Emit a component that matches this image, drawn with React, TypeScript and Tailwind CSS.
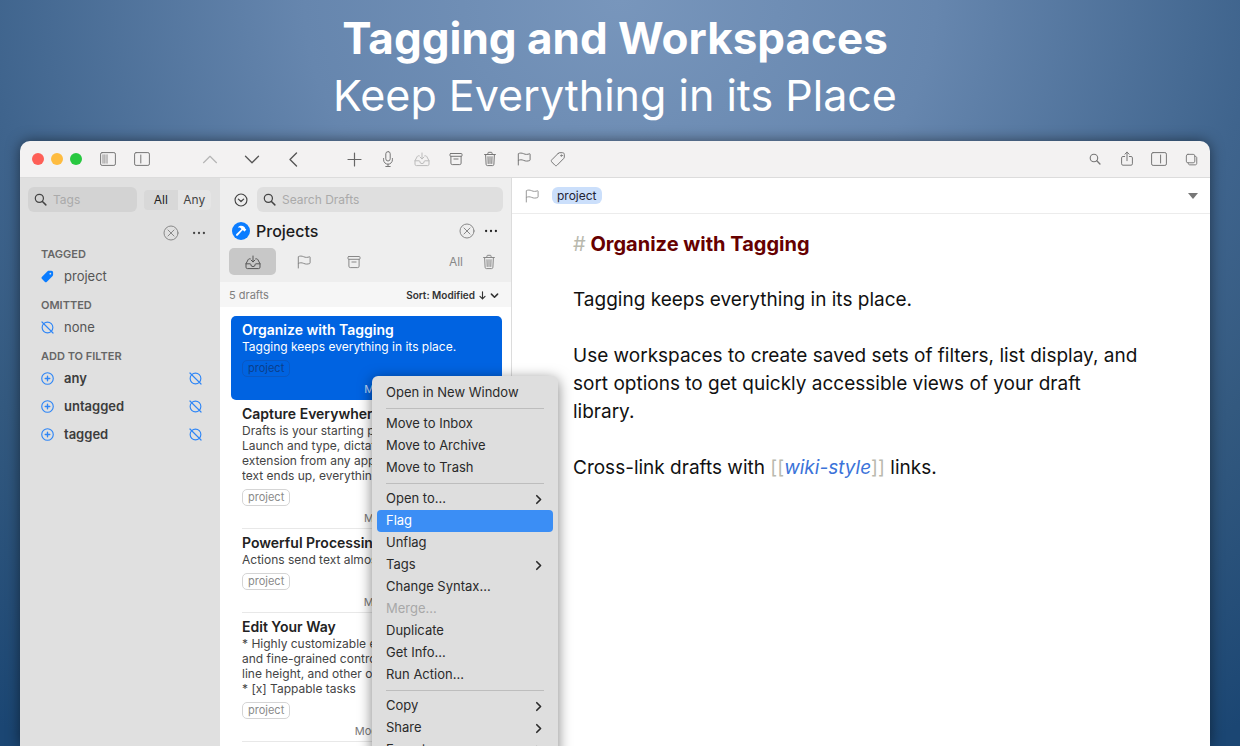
import React from 'react';

type IconProps = { className?: string; size?: number; children: React.ReactNode };

const Icon = ({ className = '', size = 16, children }: IconProps) => (
  <svg
    width={size}
    height={size}
    viewBox="0 0 16 16"
    fill="none"
    stroke="currentColor"
    strokeWidth="1"
    strokeLinecap="round"
    strokeLinejoin="round"
    className={`shrink-0 ${className}`}
    aria-hidden="true"
  >
    {children}
  </svg>
);

type GlyphProps = { className?: string; size?: number };

const PanelList = (p: GlyphProps) => (
  <Icon {...p}>
    <rect x="0.6" y="1.6" width="14.8" height="12.8" rx="1.5" />
    <path d="M3 3.8v8.4M4.9 3.8v8.4M7 3.8v8.4" strokeWidth="0.8" />
  </Icon>
);
const PanelLeft = (p: GlyphProps) => (
  <Icon {...p}>
    <rect x="0.6" y="1.6" width="14.8" height="12.8" rx="1.5" />
    <path d="M6.8 4v8" />
  </Icon>
);
const PanelRight = (p: GlyphProps) => (
  <Icon {...p}>
    <rect x="0.6" y="1.6" width="14.8" height="12.8" rx="1.5" />
    <path d="M9.6 4v8" />
  </Icon>
);
const ChevronUp = (p: GlyphProps) => (
  <Icon {...p}>
    <path d="M1.5 11.7 8 5.3l6.5 6.4" strokeWidth="1.2" />
  </Icon>
);
const ChevronDown = (p: GlyphProps) => (
  <Icon {...p}>
    <path d="M1.5 5.3 8 11.7l6.5-6.4" strokeWidth="1.3" />
  </Icon>
);
const ChevronLeft = (p: GlyphProps) => (
  <Icon {...p}>
    <path d="M10.5 2 4 8.5l6.5 6.5" strokeWidth="1.4" />
  </Icon>
);
const ChevronRight = (p: GlyphProps) => (
  <Icon {...p}>
    <path d="m5.5 2.5 5.5 5.5-5.5 5.5" strokeWidth="2.4" />
  </Icon>
);
const Plus = (p: GlyphProps) => (
  <Icon {...p}>
    <path d="M8.5 2v13M2 8.5h13" strokeWidth="1.2" />
  </Icon>
);
const Mic = (p: GlyphProps) => (
  <Icon {...p}>
    <rect x="5.8" y="0.6" width="4.4" height="9.4" rx="2.2" />
    <path d="M3.6 7.5v1.3a4.4 4.4 0 0 0 8.8 0V7.5M8 13.2v2.2M5.8 15.5h4.4" />
  </Icon>
);
const InboxDown = (p: GlyphProps) => (
  <Icon {...p}>
    <path d="M5.2 4.8h-.7c-.6 0-1 .2-1.3.8L1 9.7v3.5c0 .9.5 1.4 1.4 1.4h11.2c.9 0 1.4-.5 1.4-1.4V9.7l-2.2-4.1c-.3-.6-.7-.8-1.3-.8h-.7" />
    <path d="M1 9.8h4.2c.4 0 .6.3.6.6a2.2 2.2 0 0 0 4.4 0c0-.3.2-.6.6-.6H15M8 2v5.8M6.1 6.1 8 8l1.9-1.9" />
  </Icon>
);
const Archive = (p: GlyphProps) => (
  <Icon {...p}>
    <rect x="2" y="2.5" width="12" height="2.8" rx="0.7" />
    <path d="M2.9 5.3v6.9c0 .9.5 1.4 1.4 1.4h7.4c.9 0 1.4-.5 1.4-1.4V5.3M5.9 8h4.2" />
  </Icon>
);
const Trash = (p: GlyphProps) => (
  <Icon {...p}>
    <path d="M2.6 3.5h10.8M5.9 3.4V2.2c0-.6.3-.9.9-.9h2.4c.6 0 .9.3.9.9v1.2M3.6 3.6l.5 9.7c0 .8.5 1.3 1.3 1.3h5.2c.8 0 1.3-.5 1.3-1.3l.5-9.7M6 5.7l.2 6.8M8 5.7v6.8M10 5.7l-.2 6.8" />
  </Icon>
);
const Flag = (p: GlyphProps) => (
  <Icon {...p}>
    <path d="M2.3 14V2.7c1.7-.9 3.4-.8 5.3 0 2 .9 3.8.9 5.9.1.4-.1.6 0 .6.4v5.7c0 .3-.1.5-.4.6-2.1.8-4 .8-6-.1-1.9-.8-3.7-.9-5.4 0" />
  </Icon>
);
const Tag = (p: GlyphProps) => (
  <Icon {...p}>
    <path d="M8.3 2.3 1.8 8.8c-.7.7-.7 1.4 0 2.2l3.1 3.2c.7.7 1.5.7 2.2 0l6.5-6.6c.5-.5.7-.9.7-1.6V3.5c0-1.1-.7-1.8-1.8-1.8H9.9c-.7 0-1.1.1-1.6.6Z" />
    <circle cx="11.4" cy="4.6" r="0.7" />
  </Icon>
);
const TagFilled = (p: GlyphProps) => (
  <Icon {...p}>
    <path
      d="M8 1.6 1.3 8.3c-.9.9-.9 1.8 0 2.7l3.3 3.4c.9.9 1.8.9 2.7 0L14 7.7c.6-.6.9-1.2.9-2V3.2c0-1.3-.9-2.2-2.2-2.2H10c-.8 0-1.4.1-2 .6Zm3.5 1.8a1.100 1.100 0 1 1 0 2.200 1.100 1.100 0 0 1 0-2.200Z"
      fill="currentColor"
      fillRule="evenodd"
      stroke="none"
    />
  </Icon>
);
const Search = (p: GlyphProps) => (
  <Icon {...p}>
    <circle cx="6.6" cy="6.6" r="5" strokeWidth="1.5" />
    <path d="m10.4 10.4 4.2 4.2" strokeWidth="1.8" />
  </Icon>
);
const Share = (p: GlyphProps) => (
  <Icon {...p}>
    <path d="M5.7 5.5H3.9c-.8 0-1.3.5-1.3 1.3v6c0 .9.5 1.4 1.3 1.4h8.2c.8 0 1.3-.5 1.3-1.4v-6c0-.8-.5-1.3-1.3-1.3h-1.8M8 9.7V1.2M5.9 3.2 8 1.1l2.1 2.1" />
  </Icon>
);
const Copy = (p: GlyphProps) => (
  <Icon {...p}>
    <rect x="2.5" y="2.5" width="9" height="9" rx="1.7" />
    <path d="M11.7 4.7h.3c1 0 1.6.6 1.6 1.6v5.8c0 1-.6 1.6-1.6 1.6H6.2c-1 0-1.6-.6-1.6-1.6v-.4" />
  </Icon>
);
const CircleX = (p: GlyphProps) => (
  <Icon {...p}>
    <circle cx="8" cy="8" r="7" />
    <path d="m5 5 6 6M11 5l-6 6" />
  </Icon>
);
const CircleDown = (p: GlyphProps) => (
  <Icon {...p}>
    <circle cx="8" cy="8" r="6.8" strokeWidth="1.3" />
    <path d="M5 7l3 2.8L11 7" strokeWidth="1.5" />
  </Icon>
);
const CirclePlus = (p: GlyphProps) => (
  <Icon {...p}>
    <circle cx="8" cy="8" r="7.1" strokeWidth="1.4" />
    <path d="M8 5.2v5.6M5.2 8h5.6" strokeWidth="1.7" />
  </Icon>
);
const CircleSlash = (p: GlyphProps) => (
  <Icon {...p}>
    <circle cx="8" cy="8" r="6.6" strokeWidth="1.4" />
    <path d="m1.2 1.2 13.6 13.6" strokeWidth="1.4" />
  </Icon>
);
const Dots = (p: GlyphProps) => (
  <Icon {...p}>
    <g fill="currentColor" stroke="none">
      <circle cx="2.4" cy="8" r="1.3" />
      <circle cx="8" cy="8" r="1.3" />
      <circle cx="13.6" cy="8" r="1.3" />
    </g>
  </Icon>
);
const Hammer = () => (
  <svg width="18" height="18" viewBox="0 0 18 18" className="shrink-0" aria-hidden="true">
    <circle cx="9" cy="9" r="9" fill="#0a7cff" />
    <path d="M6 5.2c1.7-1.6 4.3-1.9 6.1-.4l.9.9c.3.3.2.6.2 1l.8.6c.3.2.3.4 0 .7l-1.2 1.2c-.3.3-.5.2-.7 0l-.7-.8-.9-.1-4.7 5.2c-.5.5-1.1.5-1.5.1-.5-.5-.4-1.1.1-1.6l5-4.8c-.5-1.2-1.5-1.8-3.1-1.6-.4 0-.5-.2-.3-.4Z" fill="#fff" />
  </svg>
);

const navActions = [
  { label: 'Previous draft', icon: ChevronUp, tone: 'text-[#b5b5b5]' },
  { label: 'Next draft', icon: ChevronDown, tone: 'text-[#555]' },
  { label: 'Back', icon: ChevronLeft, tone: 'text-[#555]' },
];

const draftActions = [
  { label: 'New draft', icon: Plus, tone: 'text-[#666]' },
  { label: 'Dictate', icon: Mic, tone: 'text-[#777]' },
  { label: 'Move to inbox', icon: InboxDown, tone: 'text-[#bbb]' },
  { label: 'Archive', icon: Archive, tone: 'text-[#777]' },
  { label: 'Trash', icon: Trash, tone: 'text-[#777]' },
  { label: 'Flag', icon: Flag, tone: 'text-[#777]' },
  { label: 'Tags', icon: Tag, tone: 'text-[#777]' },
];

const windowActions = [
  { label: 'Find', icon: Search, size: 12 },
  { label: 'Share', icon: Share, size: 16 },
  { label: 'Action list', icon: PanelRight, size: 16 },
  { label: 'Windows', icon: Copy, size: 15 },
];

const filters = ['any', 'untagged', 'tagged'];

const drafts = [
  {
    title: 'Organize with Tagging',
    lines: ['Tagging keeps everything in its place.'],
    modified: 'Modified 12 minutes ago',
    selected: true,
  },
  {
    title: 'Capture Everywhere',
    lines: [
      'Drafts is your starting point for text.',
      'Launch and type, dictate, or use the',
      'extension from any app. Wherever',
      'text ends up, everything starts here.',
    ],
    modified: 'Modified 13 minutes ago',
  },
  {
    title: 'Powerful Processing',
    lines: ['Actions send text almost anywhere.'],
    modified: 'Modified 14 minutes ago',
  },
  {
    title: 'Edit Your Way',
    lines: [
      '* Highly customizable editor, themes',
      'and fine-grained control of font size,',
      'line height, and other options.',
      '* [x] Tappable tasks',
    ],
    modified: 'Modified 200 minutes ago',
  },
];

type MenuItem = { label: string; sub?: boolean; active?: boolean; disabled?: boolean };

const menuGroups: MenuItem[][] = [
  [{ label: 'Open in New Window' }],
  [{ label: 'Move to Inbox' }, { label: 'Move to Archive' }, { label: 'Move to Trash' }],
  [
    { label: 'Open to...', sub: true },
    { label: 'Flag', active: true },
    { label: 'Unflag' },
    { label: 'Tags', sub: true },
    { label: 'Change Syntax...' },
    { label: 'Merge...', disabled: true },
    { label: 'Duplicate' },
    { label: 'Get Info...' },
    { label: 'Run Action...' },
  ],
  [
    { label: 'Copy', sub: true },
    { label: 'Share', sub: true },
    { label: 'Export', sub: true },
  ],
];

function Toolbar() {
  return (
    <header className="flex h-[37px] shrink-0 items-center rounded-t-[10px] border-b border-[#dcdcdc] bg-[#f3f2f2] pr-[3px] pl-3">
      <div className="flex gap-[7px]">
        <button aria-label="Close" className="size-3 rounded-full bg-[#fe5f57]" />
        <button aria-label="Minimize" className="size-3 rounded-full bg-[#febc40]" />
        <button aria-label="Zoom" className="size-3 rounded-full bg-[#28c840]" />
      </div>
      <div className="ml-[9px] flex text-[#777]">
        <button aria-label="Tag list" className="flex w-[34px] justify-center"><PanelList /></button>
        <button aria-label="Draft list" className="flex w-[34px] justify-center"><PanelLeft /></button>
      </div>
      <div className="ml-[30px] flex">
        {navActions.map((a) => (
          <button key={a.label} aria-label={a.label} className={`flex w-[42px] justify-center ${a.tone}`}>
            <a.icon />
          </button>
        ))}
      </div>
      <div className="ml-[22px] flex">
        {draftActions.map((a) => (
          <button key={a.label} aria-label={a.label} className={`flex w-[34px] justify-center ${a.tone}`}>
            <a.icon />
          </button>
        ))}
      </div>
      <div className="ml-auto flex items-center text-[#777]">
        {windowActions.map((a) => (
          <button key={a.label} aria-label={a.label} className="flex w-8 justify-center">
            <a.icon size={a.size} />
          </button>
        ))}
      </div>
    </header>
  );
}

function SearchField({ label, className }: { label: string; className: string }) {
  return (
    <label className={`flex h-[25px] items-center gap-1.5 rounded-md px-1.5 text-[#444] ${className}`}>
      <Search size={13} />
      <input
        type="search"
        aria-label={label}
        placeholder={label}
        className="w-full min-w-0 bg-transparent text-[12px] outline-none placeholder:text-[#aaa]"
      />
    </label>
  );
}

function TagSidebar() {
  return (
    <aside className="w-[200px] shrink-0 bg-[#e0e0e0] text-[13px] leading-[18px]">
      <div className="flex items-center gap-[7px] px-2 pt-[9px]">
        <SearchField label="Tags" className="w-[109px] bg-[#d3d3d3]" />
        <div className="flex h-5 w-[67px] rounded bg-[#d8d8d8] text-[12px] text-[#444]">
          <button className="flex-1 text-[#222]">All</button>
          <button className="flex-1 rounded-r bg-[#e5e5e5]">Any</button>
        </div>
      </div>
      <div className="mt-[13px] flex items-center justify-end gap-[13px] pr-[14px]">
        <button aria-label="Clear tag filter" className="text-[#888]"><CircleX /></button>
        <button aria-label="Tag options" className="text-[#444]"><Dots size={14} /></button>
      </div>
      <div className="pr-[18px] pl-[21px] text-[#555]">
        <h2 className="mt-1 text-[11px] font-semibold text-[#666]">TAGGED</h2>
        <div className="mt-1 flex items-center gap-[10px]">
          <TagFilled size={13} className="text-[#0a7cff]" />
          project
        </div>
        <h2 className="mt-[11px] text-[11px] font-semibold text-[#666]">OMITTED</h2>
        <div className="mt-1 flex items-center gap-[10px]">
          <CircleSlash size={13} className="text-[#2f86f6]" />
          none
        </div>
        <h2 className="mt-[11px] text-[11px] font-semibold text-[#666]">ADD TO FILTER</h2>
        <ul className="mt-1 flex flex-col gap-[10px]">
          {filters.map((name) => (
            <li key={name} className="flex items-center gap-[10px] font-semibold text-[#3c3c3c]">
              <button aria-label={`Include ${name}`} className="text-[#2f86f6]"><CirclePlus size={13} /></button>
              {name}
              <button aria-label={`Omit ${name}`} className="ml-auto text-[#2f86f6]"><CircleSlash size={13} /></button>
            </li>
          ))}
        </ul>
      </div>
    </aside>
  );
}

function DraftRow({ draft }: { draft: (typeof drafts)[number] }) {
  const on = draft.selected;
  return (
    <li className={`pl-[11px] whitespace-nowrap ${on ? 'rounded-[5px] bg-[#0063e1] text-white' : 'text-[#222]'}`}>
      <div className={`overflow-hidden border-b pt-[5px] pr-[11px] pb-[2px] ${on ? 'border-transparent' : 'border-[#e8e8e8]'}`}>
        <h3 className="text-[14px] leading-[17px] font-semibold">{draft.title}</h3>
        <p className={`mt-px text-[12px] leading-[15px] ${on ? '' : 'text-[#444]'}`}>
          {draft.lines.map((line) => (
            <span key={line} className="block">{line}</span>
          ))}
        </p>
        <div className="mt-1.5 flex">
          <span
            className={`h-[17px] rounded-[5px] border px-[5px] text-[11px] leading-[15px] ${
              on ? 'border-[#0a58c2] text-[#0b3f8c]' : 'border-[#d5d5d5] text-[#8a8a8a]'
            }`}
          >
            project
          </span>
        </div>
        <p className={`mt-[5px] text-right text-[11px] leading-[15px] ${on ? 'text-[#bcd5f8]' : 'text-[#777]'}`}>
          {draft.modified}
        </p>
      </div>
    </li>
  );
}

function DraftList() {
  return (
    <section className="flex w-[292px] shrink-0 flex-col overflow-hidden border-r border-[#dcdcdc] bg-white">
      <div className="bg-[#eeeeee] pb-[7px]">
        <div className="flex items-center gap-[9px] pt-[9px] pr-2 pl-[14px]">
          <button aria-label="Workspaces" className="text-[#444]"><CircleDown size={14} /></button>
          <SearchField label="Search Drafts" className="flex-1 bg-[#dfdfdf]" />
        </div>
        <div className="mt-[7px] flex h-6 items-center pr-[13px] pl-3">
          <Hammer />
          <h2 className="ml-1.5 text-[16px] font-medium text-[#1c1c1c]">Projects</h2>
          <button aria-label="Close workspace" className="ml-auto text-[#888]"><CircleX /></button>
          <button aria-label="Workspace options" className="ml-[9px] text-[#222]"><Dots size={14} /></button>
        </div>
        <div className="mt-[5px] flex h-[27px] items-center pr-[6px] pl-[9px] text-[#888]">
          <button aria-label="Inbox" className="flex h-[27px] w-[47px] items-center justify-center rounded-[5px] bg-[#c8c8c8] text-[#555]">
            <InboxDown />
          </button>
          <button aria-label="Flagged" className="ml-1 flex w-[47px] justify-center"><Flag /></button>
          <button aria-label="Archived" className="ml-[3px] flex w-[47px] justify-center"><Archive /></button>
          <button className="ml-auto text-[12px]">All</button>
          <button aria-label="Trashed" className="ml-[10px] flex w-8 justify-center"><Trash /></button>
        </div>
      </div>
      <div className="flex h-[25px] shrink-0 items-center justify-between bg-[#f6f6f6] pt-0.5 pr-3 pl-[9px] text-[11px]">
        <span className="text-[#808080]">5 drafts</span>
        <button className="flex items-center gap-[3px] text-[10px] font-semibold text-[#333]">
          Sort: Modified
          <Icon size={9}>
            <path d="M8 1.5v12.5M3.5 9.5 8 14l4.5-4.5" strokeWidth="2" />
          </Icon>
          <Icon size={9}>
            <path d="m2.5 5.5 5.5 5.5 5.5-5.5" strokeWidth="2.8" />
          </Icon>
        </button>
      </div>
      <ul className="flex flex-col pt-[9px] pr-[9px] pl-[11px]">
        {drafts.map((d) => (
          <DraftRow key={d.title} draft={d} />
        ))}
      </ul>
    </section>
  );
}

function Editor() {
  return (
    <main className="min-w-0 flex-1 bg-white">
      <div className="flex h-9 items-center border-b border-[#ececec] px-3">
        <button aria-label="Flag draft" className="text-[#999]"><Flag /></button>
        <button className="ml-3 h-[17px] rounded-md bg-[#cbdffb] px-[5px] text-[12px] leading-[17px] text-[#223]">project</button>
        <button aria-label="Tag entry" className="ml-auto text-[#777]">
          <svg width="10" height="6" viewBox="0 0 10 6" aria-hidden="true">
            <path d="M0 0h10L5 6Z" fill="currentColor" />
          </svg>
        </button>
      </div>
      <article className="pt-4 pr-[66px] pl-[61px] text-[19px] leading-7 text-[#111]">
        <h1 className="text-[20px] leading-7 font-bold text-[#660000]">
          <span className="font-normal text-[#b9b9ae]">#</span> Organize with Tagging
        </h1>
        <p className="mt-7">Tagging keeps everything in its place.</p>
        <p className="mt-7">
          Use workspaces to create saved sets of filters, list display, and sort options to get quickly accessible
          views of your draft library.
        </p>
        <p className="mt-7">
          Cross-link drafts with <span className="text-[#b9b9ae]">[[</span>
          <a href="#wiki-style" className="text-[#3b73d9] italic">wiki-style</a>
          <span className="text-[#b9b9ae]">]]</span> links.
        </p>
      </article>
    </main>
  );
}

function ContextMenu() {
  return (
    <div
      role="menu"
      className="absolute top-[198px] left-[352px] w-[186px] rounded-md bg-[#dedede] px-[5px] py-1.5 text-[13px] text-[#2a2a2a] shadow-[0_3px_14px_rgba(0,0,0,0.5)]"
    >
      {menuGroups.map((group, i) => (
        <div key={group[0].label}>
          {i > 0 && <hr className="mx-[9px] my-1 border-[#bdbdbd]" />}
          {group.map((item) => (
            <button
              key={item.label}
              role="menuitem"
              disabled={item.disabled}
              className={`flex h-[22px] w-full items-center justify-between rounded px-[9px] ${
                item.active ? 'bg-[#3b8ef5] text-white' : item.disabled ? 'text-[#a8a8a8]' : ''
              }`}
            >
              {item.label}
              {item.sub && <ChevronRight size={11} />}
            </button>
          ))}
        </div>
      ))}
    </div>
  );
}

export default function App() {
  return (
    <div className="flex h-screen flex-col overflow-hidden bg-[radial-gradient(ellipse_85%_120%_at_50%_0%,#7896bc_0%,#6686ae_30%,#3f648d_60%,#33597f_74%,#1b4673_100%)] pr-[30px] pl-5 font-[Inter,'Liberation_Sans',sans-serif]">
      <div className="flex h-[141px] shrink-0 flex-col items-center pt-[10px] text-white">
        <h1 className="text-[44px] leading-[57px] font-bold">Tagging and Workspaces</h1>
        <p className="text-[43px] leading-[57px]">Keep Everything in its Place</p>
      </div>
      <div className="flex flex-1 flex-col rounded-t-[10px] shadow-[0_0_14px_rgba(0,0,0,0.5)]">
        <Toolbar />
        <div className="relative flex flex-1">
          <TagSidebar />
          <DraftList />
          <Editor />
          <ContextMenu />
        </div>
      </div>
    </div>
  );
}
